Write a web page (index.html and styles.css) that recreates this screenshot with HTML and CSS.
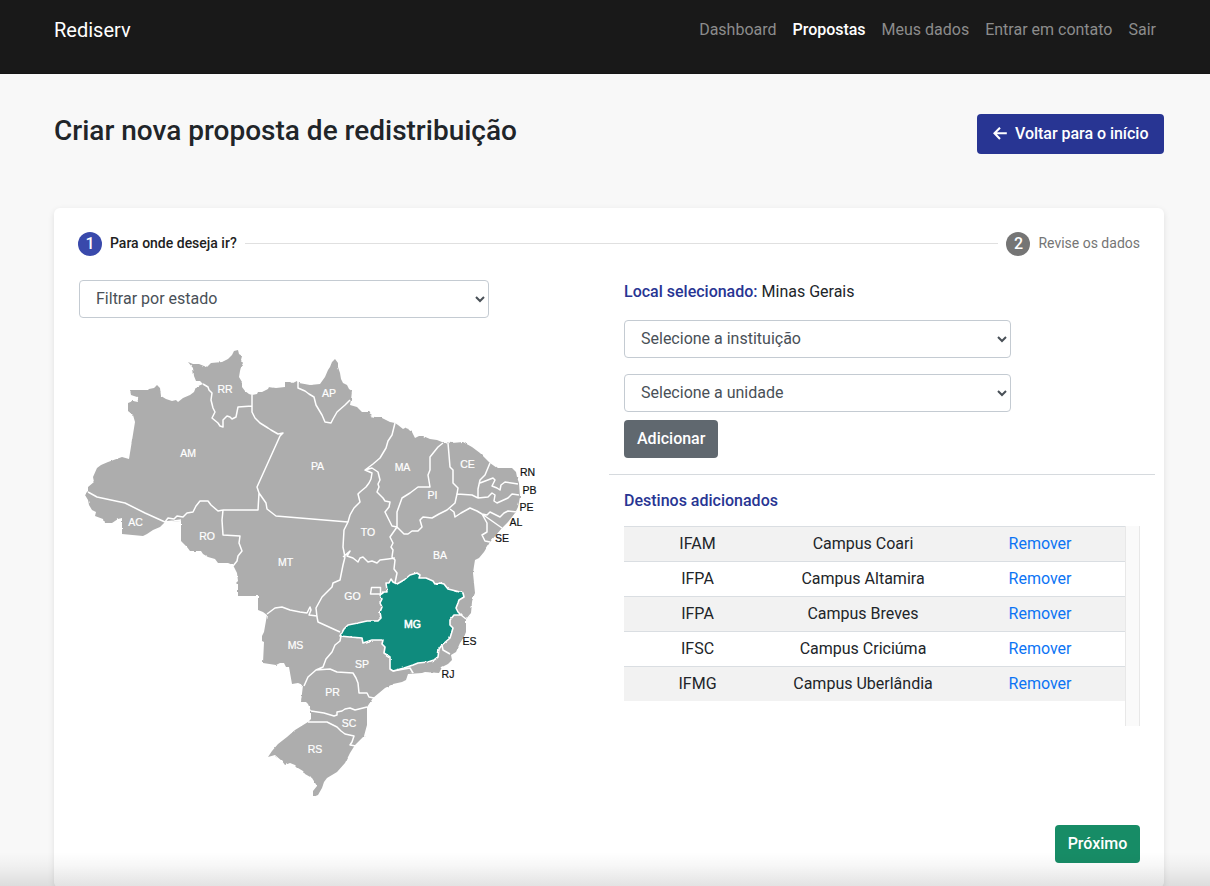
FILE: index.html
```html
<!DOCTYPE html>
<html lang="pt-BR">
<head>
<meta charset="utf-8">
<title>Rediserv</title>
<link rel="stylesheet" href="styles.css">
</head>
<body>
<header class="topbar">
  <a class="brand">Rediserv</a>
  <nav class="nav">
    <a>Dashboard</a><a class="active">Propostas</a><a>Meus dados</a><a>Entrar em contato</a><a>Sair</a>
  </nav>
</header>
<main class="page">
  <div class="heading">
    <h1>Criar nova proposta de redistribuição</h1>
    <button class="btn btn-back">
      <svg width="14" height="14" viewBox="0 0 14 14"><path d="M7 .7 1.500 6.300 7 11.900M1.800 6.300H13.800" fill="none" stroke="#fff" stroke-width="2.100"/></svg>
      <span>Voltar para o início</span>
    </button>
  </div>
  <section class="card">
    <div class="stepper">
      <span class="dot">1</span><span class="step current">Para onde deseja ir?</span>
      <span class="line"></span>
      <span class="dot muted">2</span><span class="step">Revise os dados</span>
    </div>
    <div class="columns">
      <div class="left">
        <select class="select"><option>Filtrar por estado</option></select>
        <svg class="map" width="470" height="460" viewBox="79 340 470 460">
          <defs>
            <filter id="coast" filterUnits="userSpaceOnUse" x="79" y="340" width="470" height="460" color-interpolation-filters="sRGB">
              <feTurbulence type="fractalNoise" baseFrequency="0.2" numOctaves="1" seed="4" result="n"/>
              <feDisplacementMap in="SourceGraphic" in2="n" scale="2.500" xChannelSelector="R" yChannelSelector="G"/>
            </filter>
          </defs>
          <path class="land" filter="url(#coast)" d="M234 351 238 350 239 354 242 356 241 360 243 363 241 367 240 371 239 377 242 382 242 387 245 391 249 394 252 395 257 394 258 392 262 392 268 389 269 387 276 388 285 387 285 382 291 382 293 383 297 381 299 383 310 385 320 384 325 377 328 370 330 367 332 362 335 359 338 363 338 367 340 373 341 379 343 383 347 385 349 389 352 391 351 400 350 405 357 407 362 412 368 412 372 415 370 416 375 417 380 417 390 422 395 423 398 425 403 429 407 427 409 430 412 432 415 438 419 436 423 436 430 439 437 440 442 442 452 443 463 442 472 447 480 453 490 463 497 468 512 468 516 472 517 477 519 483 520 497 518 507 515 513 508 522 502 528 490 542 484 552 479 558 475 560 474 566 473 573 475 593 473 598 472 603 471 613 466 619 466 632 464 637 460 643 456 652 451 655 452 660 448 664 442 667 439 673 425 672 422 673 408 674 406 680 402 682 393 684 385 688 373 698 367 707 367 725 364 736 355 745 350 753 345 763 337 772 327 778 324 782 322 788 318 795 313 797 313 791 317 786 312 778 305 774 303 771 298 768 295 765 290 763 285 765 282 761 275 755 268 757 272 751 278 744 287 737 295 730 308 722 311 719 311 711 308 704 306 702 301 702 303 685 298 683 292 684 289 667 286 667 284 663 280 663 276 665 263 663 264 642 262 641 262 636 264 632 267 615 263 612 258 610 258 596 238 596 238 585 236 583 238 581 237 573 233 565 228 563 218 563 215 559 208 557 203 554 201 551 190 551 187 547 181 541 181 521 165 522 160 527 153 530 147 534 143 536 122 534 122 518 118 519 112 523 104 523 103 519 95 516 96 512 92 510 89 505 88 500 85 495 88 492 88 487 94 482 93 477 97 468 101 465 108 462 122 457 129 459 135 422 133 415 128 411 128 403 133 401 138 402 137 397 131 395 130 390 148 390 149 389 154 388 157 385 160 388 161 396 166 399 172 401 176 400 178 402 183 398 190 395 194 392 196 387 203 384 200 381 196 381 194 376 193 368 188 362 193 364 199 364 204 366 207 367 211 363 222 362 228 359 232 355Z"/>
          <path class="borders" d="M203 384 208 387 209 390 212 393 211 400 213 408 215 412 212 418 218 423 220 426 223 427 223 420 227 416 230 417 232 419 236 417 238 407 252 406M252 395V412L255 418 260 423 268 428 271 430 278 434 283 433 280 436 257 487 259 493 258 510H223M259 493 266 503 267 509 276 516 348 522M298 381 298 388 305 391 309 394 314 397 316 405 322 415 325 422 331 423 333 419 337 412 345 405 350 400M395 423 392 435 388 441 386 448 380 458 373 464 365 470 372 473 371 479 369 483 366 487 360 492 358 494 360 502 354 508 350 515 348 522 344 530 343 547 345 557M365 470 372 468 378 472 380 480 378 484 379 487 377 492 383 498 385 501 390 502 389 507 385 512 390 522 392 526 397 527 397 512 402 498 410 493 418 487 430 487 428 475 430 470 430 457 438 447 443 443M448 443 450 467 453 470 453 483 458 488 457 494 472 495 478 498M490 463 485 475 480 480 478 489 478 498M480 483 493 478 495 480 492 486 497 488 500 490 501 485 505 482 518 484M478 498 488 497 492 493 495 495 494 501 497 503 508 498 512 494 519 495M397 527 402 532 404 534 408 534 412 531 418 531 422 527 420 520 423 517 432 518 439 514 447 510 455 503 457 494M450 509 454 512 455 517 461 513 470 508 477 511 482 514M482 514 487 515 490 512 500 517 504 513 508 511 517 512M482 514 502 528M482 514 487 523 487 532 482 535 485 541 490 542M397 527 390 537 393 543 391 547 393 550 392 557 395 560 394 569 397 573 395 583M343 557 350 551 347 556 353 558 358 562 360 558 363 557 368 562 372 561 377 563 380 560 388 559 395 558M345 557 343 565 340 580 333 583 332 587 322 597 316 608 317 617 318 622 340 632M267 614 275 608 282 607 290 610 300 612 307 613 310 607 311 610 309 615 317 616M165 522 168 518 174 519 177 516 183 517 187 513 193 512 196 506 200 501 208 501 211 505 218 511 223 510M223 510 222 520 223 535 240 536 239 543 242 551 238 556 237 561 233 566M88 492 97 497 125 503 145 513 165 522 174 521 181 520M461 615 466 619M442 645 443 650 450 654M393 671 410 668 413 673M341 636 340 641 335 645 332 652 326 659 323 667 316 670 308 677 304 686M316 670 330 669 337 672 353 673 356 678 358 683 359 693 367 693 369 697 374 698M311 711 324 713 334 716 337 715 337 712 342 711 345 709 350 708 355 710 367 707M308 722 327 722 337 727 341 731 345 734 354 736 352 742 350 745 356 746M371.500 587.500H380.500V594H370.500Z"/>
          <path class="chosen" filter="url(#coast)" d="M340 636 344 629 348 625 358 623 367 621 378 621 381 618 380 612 382 607 380 603 382 599 380 595 384 592 387 592 386 583 389 583 391 579 393 582 397 584 404 580 410 575 417 573 420 575 419 578 426 578 433 581 435 584 440 583 444 584 448 589 456 591 463 593 464 597 459 600 458 603 456 608 458 612 461 615 454 615 450 620 450 625 453 628 450 638 442 645 439 649 438 657 434 660 428 662 418 663 413 665 404 668 393 671 390 669 390 657 384 653 385 647 382 644 383 640 372 640 363 643 362 638 350 637Z"/>
          <g class="uf">
            <text x="225" y="393">RR</text><text x="329" y="397">AP</text><text x="188" y="457">AM</text><text x="317.500" y="470">PA</text><text x="402.500" y="471">MA</text><text x="467.500" y="468">CE</text><text x="432.500" y="499">PI</text><text x="135.500" y="526">AC</text><text x="207" y="540">RO</text><text x="285.500" y="566">MT</text><text x="368" y="536">TO</text><text x="440" y="559">BA</text><text x="352.500" y="600">GO</text><text x="412.500" y="628" class="strong">MG</text><text x="295.500" y="649">MS</text><text x="362" y="668">SP</text><text x="332.500" y="696">PR</text><text x="349" y="727">SC</text><text x="315" y="753">RS</text>
          </g>
          <g class="uf outside">
            <text x="527.500" y="476">RN</text><text x="529.500" y="494">PB</text><text x="526.500" y="511">PE</text><text x="516" y="526">AL</text><text x="502" y="542">SE</text><text x="469.500" y="645">ES</text><text x="448" y="678">RJ</text>
          </g>
        </svg>
      </div>
      <div class="right">
        <p class="place"><b>Local selecionado:</b> Minas Gerais</p>
        <select class="select"><option>Selecione a instituição</option></select>
        <select class="select second"><option>Selecione a unidade</option></select>
        <button class="btn btn-add">Adicionar</button>
        <hr class="rule">
        <h2>Destinos adicionados</h2>
        <div class="scroller">
          <table class="table">
            <tr><td>IFAM</td><td>Campus Coari</td><td><a>Remover</a></td></tr>
            <tr><td>IFPA</td><td>Campus Altamira</td><td><a>Remover</a></td></tr>
            <tr><td>IFPA</td><td>Campus Breves</td><td><a>Remover</a></td></tr>
            <tr><td>IFSC</td><td>Campus Criciúma</td><td><a>Remover</a></td></tr>
            <tr><td>IFMG</td><td>Campus Uberlândia</td><td><a>Remover</a></td></tr>
          </table>
          <span class="track"></span>
        </div>
        <button class="btn btn-next">Próximo</button>
      </div>
    </div>
  </section>
</main>
<div class="fade"></div>
</body>
</html>
```
FILE: styles.css
```css
* { box-sizing: border-box; }
body { margin: 0; height: 886px; overflow: hidden; background: #f8f8f8; color: #212529; font: 16px/24px Roboto, sans-serif; }
.topbar { height: 74px; background: #191919; padding: 0 54px; display: flex; justify-content: space-between; border-bottom: 1px solid #151515; }
.brand { font-size: 20px; line-height: 30px; margin-top: 15px; color: #fff; }
.nav { display: flex; gap: 16px; margin-top: 18px; color: #8c8c8c; }
.nav .active { color: #fff; font-weight: 500; letter-spacing: -.03px; }
.page { padding: 40px 46px 0 54px; }
.heading { display: flex; justify-content: space-between; height: 94px; }
h1 { margin: 0; font-size: 28px; line-height: 34px; font-weight: 500; }
.btn { border: 0; border-radius: 4px; color: #fff; font: 500 16px/24px Roboto, sans-serif; height: 38px; padding: 0 13px; display: block; }
.btn-back { display: flex; align-items: center; gap: 8px; width: 187px; height: 40px; padding: 0 0 0 16px; background: #283593; letter-spacing: -.03px; white-space: nowrap; }
.card { height: 680px; background: #fff; border-radius: 6px; padding: 24px 24px 0; box-shadow: 0 2px 6px rgba(0, 0, 0, .1); }
.stepper { display: flex; align-items: center; gap: 8px; height: 24px; font-size: 14px; }
.dot { width: 24px; height: 24px; border-radius: 50%; background: #3949ab; color: #fff; text-align: center; font-size: 16px; font-weight: 500; }
.dot.muted { background: #757575; }
.step { color: #757575; padding-bottom: 2px; }
.step.current { color: #212121; font-weight: 500; }
.line { flex: 1; height: 1px; margin-bottom: 1px; background: #e0e0e0; }
.columns { display: grid; grid-template-columns: 531px 531px; }
.left { padding: 24px 0 0 1px; }
.select { display: block; width: 387px; height: 38px; padding: 5px 12px 7px; border: 1px solid #c4cbd2; border-radius: 4px; background: #fff; color: #495057; font: 16px/24px Roboto, sans-serif; }
.left .select { width: 410px; }
.map { display: block; margin-top: 22px; }
.land { fill: #adadad; }
.borders { fill: none; stroke: #fff; stroke-width: 1.5; stroke-linejoin: round; }
.chosen { fill: #0f8b7d; stroke: #fff; stroke-width: 1.6; stroke-linejoin: round; }
.uf { fill: #fff; stroke: #fff; stroke-width: .2; font: 10.5px "Liberation Sans", Arial, sans-serif; text-anchor: middle; }
.uf .strong { stroke-width: .5; }
.outside { fill: #111; stroke: #111; }
.right { padding: 24px 0 0 15px; }
.place { margin: 0 0 16px; }
.place b, h2 { color: #283593; font-weight: 500; }
.second { margin-top: 16px; }
.btn-add { margin-top: 8px; background: #60686f; }
.rule { margin: 16px -15px 0; border: 0; border-top: 1px solid #d6dade; }
h2 { margin: 14px 0 13px; font-size: 16px; line-height: 24px; }
.scroller { display: flex; height: 200px; align-items: flex-start; width: 516px; }
.table { border-spacing: 0; width: 501px; table-layout: fixed; text-align: center; }
.table td { height: 35px; padding: 0; border-top: 1px solid #dadee2; }
.table td:first-child { width: 147px; }
.table td:nth-child(2) { width: 184px; }
.table tr:nth-child(odd) { background: #f2f2f2; }
.table a { color: #0c74f4; }
.track { width: 15px; height: 200px; background: #fafafa; border: solid #e8e8e8; border-width: 0 1px; }
.btn-next { margin: 99px 0 0 431px; width: 85px; padding: 0; background: #178c66; }
.fade { position: absolute; left: 0; right: 0; top: 852px; height: 34px; background: linear-gradient(transparent, rgba(0, 0, 0, .03) 40%, rgba(0, 0, 0, .11)); }
```
